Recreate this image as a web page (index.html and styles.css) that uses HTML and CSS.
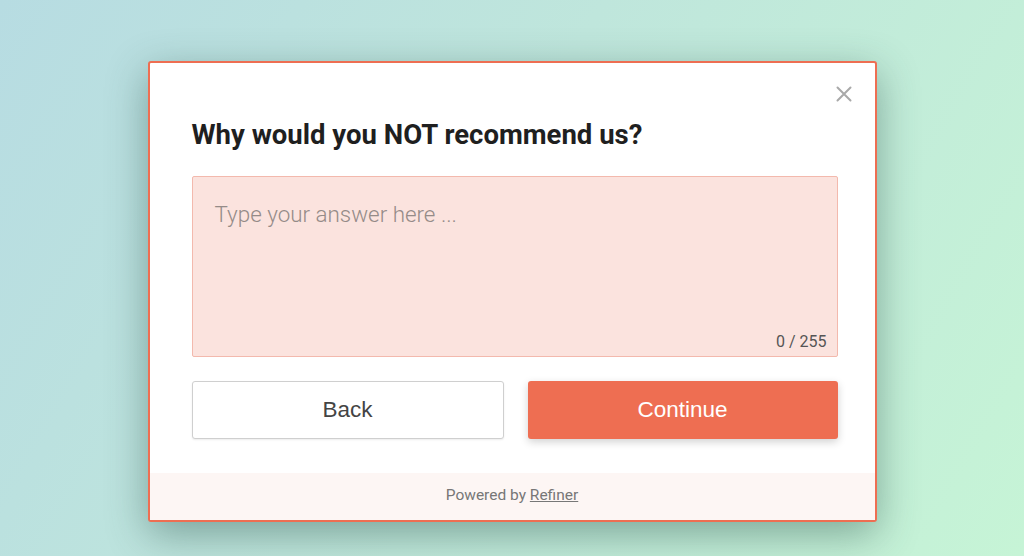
FILE: index.html
```html
<!DOCTYPE html>
<html>

<head>
    <meta charset="utf-8">
    <meta name="viewport" content="width=device-width, initial-scale=1">
    <title>Refiner survey</title>
    <link rel="stylesheet" href="styles.css">
</head>

<body>
    <div class="survey">
        <button class="close-button" aria-label="Close">
            <svg width="16" height="16" viewBox="0 0 16 16">
                <path d="M1.5 1.5 L14.5 14.5 M14.5 1.5 L1.5 14.5" stroke="#a9a9a9" stroke-width="2" fill="none" stroke-linecap="round" />
            </svg>
        </button>
        <div class="survey-body">
            <h1 class="question">Why would you NOT recommend us?</h1>
            <div class="answer-box">
                <textarea class="answer-input" placeholder="Type your answer here ..." maxlength="255"></textarea>
                <span class="counter">0 / 255</span>
            </div>
            <div class="actions">
                <button class="back-button">Back</button>
                <button class="continue-button">Continue</button>
            </div>
        </div>
        <div class="footer">Powered by <a href="#">Refiner</a></div>
    </div>
</body>

</html>
```

FILE: styles.css
```css
html,
body {
    height: 100%;
}

body {
    margin: 0;
    display: flex;
    justify-content: center;
    align-items: flex-start;
    padding-top: 61px;
    box-sizing: border-box;
    background: linear-gradient(120deg, #b7dce2 0%, #bfe6dc 45%, #c6f4d6 100%);
    font-family: "Liberation Sans", Arial, sans-serif;
}

.survey {
    position: relative;
    width: 729px;
    box-sizing: border-box;
    border: 2px solid #ee6e52;
    border-radius: 3px;
    background-color: #fff;
    box-shadow: 0 12px 40px rgba(40, 80, 70, 0.45);
}

.close-button {
    position: absolute;
    top: 23px;
    right: 23px;
    padding: 0;
    border: none;
    background: transparent;
    cursor: pointer;
}

.close-button svg {
    display: block;
}

.survey-body {
    padding: 56px 37px 34px 42px;
}

.question {
    margin: 0;
    font-family: Roboto, sans-serif;
    font-size: 27.5px;
    line-height: 32px;
    font-weight: 700;
    color: #1f1f1f;
}

.answer-box {
    position: relative;
    margin-top: 25px;
}

.answer-input {
    display: block;
    width: 100%;
    height: 181px;
    box-sizing: border-box;
    padding: 24px 22px;
    border: 1px solid #f3b9ad;
    border-radius: 2px;
    background-color: #fbe3de;
    font-family: Roboto, sans-serif;
    font-size: 22.4px;
    font-weight: 300;
    color: #333;
    resize: none;
    outline: none;
}

.answer-input::placeholder {
    color: #958b88;
}

.counter {
    position: absolute;
    right: 11px;
    bottom: 6px;
    font-family: Roboto, sans-serif;
    font-size: 16px;
    color: #555;
}

.actions {
    display: flex;
    gap: 24px;
    margin-top: 24px;
}

.back-button,
.continue-button {
    flex: 1;
    height: 58px;
    border-radius: 3px;
    font-family: "Liberation Sans", Arial, sans-serif;
    font-size: 22.5px;
    cursor: pointer;
}

.back-button {
    border: 1px solid #cfcfcf;
    background-color: #fff;
    color: #444;
    box-shadow: 0 1px 2px rgba(0, 0, 0, 0.08);
}

.continue-button {
    border: none;
    background-color: #ee6e52;
    color: #fff;
    box-shadow: 0 3px 8px rgba(0, 0, 0, 0.18);
}

.footer {
    height: 47px;
    line-height: 45px;
    text-align: center;
    background-color: #fdf6f4;
    font-family: Roboto, sans-serif;
    font-size: 15.5px;
    color: #777;
}

.footer a {
    color: #777;
}
```
